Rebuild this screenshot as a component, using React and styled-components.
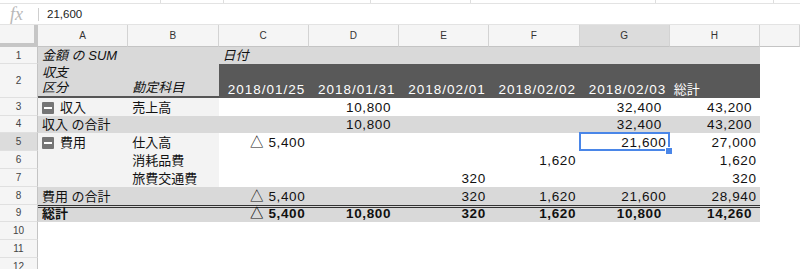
import styled, { createGlobalStyle } from "styled-components";

const GlobalStyle = createGlobalStyle`
  html, body { margin: 0; padding: 0; background: #fff; }
  body {
    font-family: "Liberation Sans", "Noto Sans CJK JP", sans-serif;
    overflow: hidden;
  }
`;

const Page = styled.div`
  width: 800px;
  height: 269px;
  overflow: hidden;
  display: flex;
  flex-direction: column;
`;

const ToolbarEdge = styled.div`
  height: 3px;
  border-bottom: 1px solid #e3e3e3;
  display: flex;
`;

const ToolbarGap = styled.div`
  width: ${(p) => p.$w}px;
  height: 3px;
  border-right: 1px solid #dedede;
`;

const FormulaBar = styled.div`
  height: 20px;
  border-bottom: 1px solid #e3e3e3;
  display: flex;
  align-items: center;
`;

const FxLabel = styled.div`
  width: 38px;
  padding-left: 10px;
  box-sizing: border-box;
  font-family: "Liberation Serif", serif;
  font-style: italic;
  font-size: 18px;
  color: #b8b8b8;
  line-height: 20px;
`;

const FxDivider = styled.div`
  width: 1px;
  height: 13px;
  background: #cfcfcf;
`;

const FxValue = styled.div`
  padding-left: 8px;
  font-size: 11.5px;
  color: #222;
`;

const Sheet = styled.div`
  display: grid;
  grid-template-columns: 38px repeat(8, 90.25px) 1fr;
  grid-template-rows: 22px 17px 33.8px repeat(10, 17.8px);
`;

const Corner = styled.div`
  box-sizing: border-box;
  background: #f5f5f5;
  border-right: 4px solid #c6c6c6;
  border-bottom: 4px solid #c6c6c6;
`;

const ColHead = styled.div`
  box-sizing: border-box;
  display: flex;
  align-items: center;
  justify-content: center;
  background: ${(p) => (p.$active ? "#dcdcdc" : "#f5f5f5")};
  border-right: 1px solid #d3d3d3;
  border-bottom: 1px solid #c4c4c4;
  font-size: 10px;
  color: #333;
`;

const RowHead = styled.div`
  box-sizing: border-box;
  display: flex;
  align-items: center;
  justify-content: center;
  background: ${(p) => (p.$active ? "#dcdcdc" : "#f5f5f5")};
  border-right: 1px solid #c4c4c4;
  border-bottom: 1px solid #e0e0e0;
  font-size: 10px;
  color: #444;
`;

const TONES = {
  light: { bg: "#d9d9d9", fg: "#111" },
  dark: { bg: "#595959", fg: "#fff" },
  label: { bg: "#f3f3f3", fg: "#111" },
  plain: { bg: "#fff", fg: "#111" },
};

const Cell = styled.div`
  position: relative;
  box-sizing: border-box;
  display: flex;
  align-items: flex-end;
  justify-content: ${(p) => (p.$num ? "flex-end" : "flex-start")};
  padding: 0 ${(p) => (p.$trail ? "8px" : "3.5px")} 1px 4px;
  background: ${(p) => TONES[p.$tone].bg};
  color: ${(p) => TONES[p.$tone].fg};
  font-size: ${(p) => (p.$num ? "13.5px" : "13px")};
  line-height: 15px;
  font-style: ${(p) => (p.$italic ? "italic" : "normal")};
  font-weight: ${(p) => (p.$bold ? 700 : 400)};
  letter-spacing: ${(p) => (p.$date ? "1px" : p.$num ? "0.6px" : "0")};
  white-space: pre-line;
  border-top: ${(p) => (p.$rule ? "3px double #333" : "0")};
  border-bottom: ${(p) => (p.$underline ? "2px solid #555" : "0")};

  ${(p) =>
    p.$selected &&
    `
    &::after {
      content: "";
      position: absolute;
      inset: -1px 0 0 -1px;
      border: 2px solid #4a86e8;
    }
    &::before {
      content: "";
      position: absolute;
      right: -3px;
      bottom: -4px;
      width: 6px;
      height: 6px;
      background: #4a86e8;
      border: 1px solid #fff;
      z-index: 1;
    }
  `}
`;

const Toggle = styled.span`
  position: relative;
  width: 12px;
  height: 12px;
  margin: 0 6px 1px 0;
  background: #757575;
  border-radius: 1px;
  flex-shrink: 0;

  &::before {
    content: "";
    position: absolute;
    left: 2px;
    right: 2px;
    top: 5px;
    height: 2px;
    background: #fff;
  }
`;

const COLS = ["A", "B", "C", "D", "E", "F", "G", "H"];

const txt = (t, extra = {}) => ({ t, ...extra });
const num = (t, extra = {}) => ({ t, num: true, ...extra });
const pos = (t) => num(t, { trail: true });
const date = (t) => num(t, { date: true });

const ROWS = [
  {
    tones: Array(8).fill("light"),
    cells: [txt("金額 の SUM", { italic: true }), null, txt("日付", { italic: true })],
  },
  {
    tones: ["light", "light", "dark", "dark", "dark", "dark", "dark", "dark"],
    underline: [0, 1],
    cells: [
      txt("収支\n区分", { italic: true }),
      txt("勘定科目", { italic: true }),
      date("2018/01/25"),
      date("2018/01/31"),
      date("2018/02/01"),
      date("2018/02/02"),
      date("2018/02/03"),
      txt("総計"),
    ],
  },
  {
    tones: ["label", "label"],
    cells: [txt("収入", { toggle: true }), txt("売上高"), null, pos("10,800"), null, null, pos("32,400"), pos("43,200")],
  },
  {
    tones: Array(8).fill("light"),
    cells: [txt("収入 の合計"), null, null, pos("10,800"), null, null, pos("32,400"), pos("43,200")],
  },
  {
    tones: ["label", "label"],
    cells: [
      txt("費用", { toggle: true }),
      txt("仕入高"),
      num("△ 5,400"),
      null,
      null,
      null,
      num("21,600", { selected: true }),
      num("27,000"),
    ],
  },
  {
    tones: ["label", "label"],
    cells: [null, txt("消耗品費"), null, null, null, num("1,620"), null, num("1,620")],
  },
  {
    tones: ["label", "label"],
    cells: [null, txt("旅費交通費"), null, null, num("320"), null, null, num("320")],
  },
  {
    tones: Array(8).fill("light"),
    cells: [txt("費用 の合計"), null, num("△ 5,400"), null, num("320"), num("1,620"), num("21,600"), num("28,940")],
  },
  {
    tones: Array(8).fill("light"),
    bold: true,
    rule: true,
    cells: [txt("総計"), null, num("△ 5,400"), pos("10,800"), num("320"), num("1,620"), pos("10,800"), pos("14,260")],
  },
  { cells: [] },
  { cells: [] },
  { cells: [] },
];

const ACTIVE_ROW = 5;
const ACTIVE_COL = "G";

function App() {
  return (
    <Page>
      <GlobalStyle />
      <ToolbarEdge>
        {[160, 62, 146, 99, 184, 117].map((w, i) => (
          <ToolbarGap key={i} $w={w} />
        ))}
      </ToolbarEdge>
      <FormulaBar>
        <FxLabel>fx</FxLabel>
        <FxDivider />
        <FxValue>21,600</FxValue>
      </FormulaBar>
      <Sheet>
        <Corner />
        {COLS.map((c) => (
          <ColHead key={c} $active={c === ACTIVE_COL}>
            {c}
          </ColHead>
        ))}
        <ColHead />
        {ROWS.map((row, r) => {
          const n = r + 1;
          return [
            <RowHead key={`h${n}`} $active={n === ACTIVE_ROW}>
              {n}
            </RowHead>,
            ...COLS.map((c, ci) => {
              const cell = row.cells[ci];
              const tone = (row.tones && row.tones[ci]) || "plain";
              return (
                <Cell
                  key={`${c}${n}`}
                  $tone={tone}
                  $num={cell?.num}
                  $date={cell?.date}
                  $trail={cell?.trail}
                  $italic={cell?.italic}
                  $bold={row.bold}
                  $rule={row.rule}
                  $underline={row.underline?.includes(ci)}
                  $selected={cell?.selected}
                >
                  {cell?.toggle && <Toggle />}
                  {cell?.t}
                </Cell>
              );
            }),
            <Cell key={`I${n}`} $tone="plain" />,
          ];
        })}
      </Sheet>
    </Page>
  );
}

export default App;
